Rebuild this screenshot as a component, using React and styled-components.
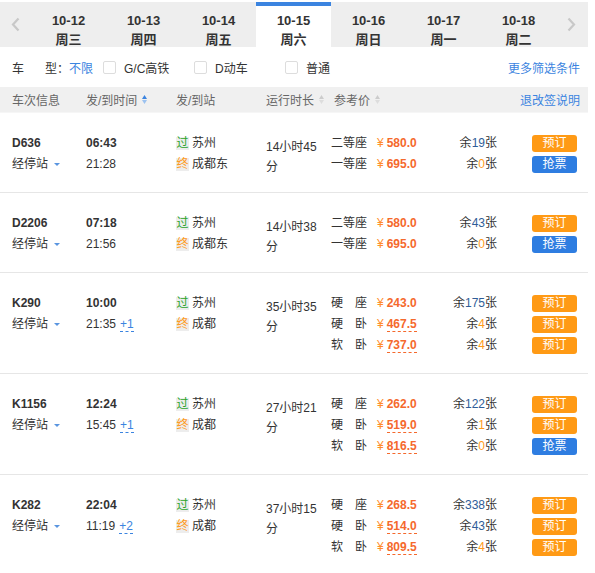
import styled, { createGlobalStyle } from "styled-components";

const GlobalStyle = createGlobalStyle`
  body {
    margin: 0;
    background: #fff;
    font-family: "Liberation Sans", "Noto Sans CJK SC", sans-serif;
    font-size: 12px;
    color: #333;
  }
`;

const Page = styled.div`
  width: 588px;
  padding-top: 2px;
`;

const DateBar = styled.div`
  display: flex;
  height: 45px;
  background: #eee;
`;

const Arrow = styled.div`
  width: 31px;
  display: flex;
  align-items: center;
  justify-content: center;
`;

const DateTab = styled.div`
  width: 75px;
  box-sizing: border-box;
  display: flex;
  flex-direction: column;
  align-items: center;
  font-weight: bold;
  color: #333;
  background: ${(p) => (p.active ? "#fff" : "transparent")};
  border-top: 4px solid ${(p) => (p.active ? "#3b84e0" : "transparent")};
  padding-top: 7px;
`;

const DateNum = styled.div`
  font-size: 13px;
  line-height: 16px;
`;

const DateWeek = styled.div`
  font-size: 13px;
  line-height: 20px;
  margin-top: 1px;
`;

const FilterRow = styled.div`
  display: flex;
  align-items: center;
  height: 40px;
  padding: 0 8px 0 12px;
  font-size: 12px;
`;

const Label = styled.span`
  width: 57px;
  display: flex;
  justify-content: space-between;
`;

const Blue = styled.span`
  color: #3b84e0;
  cursor: pointer;
`;

const Option = styled.label`
  display: flex;
  align-items: center;
  width: 91px;
  color: #333;
`;

const Check = styled.span`
  width: 11px;
  height: 11px;
  border: 1px solid #ddd;
  border-radius: 2px;
  margin-right: 8px;
  background: #fff;
`;

const FirstOption = styled.span`
  width: 34px;
`;

const MoreLink = styled(Blue)`
  margin-left: auto;
`;

const HeadRow = styled.div`
  display: grid;
  grid-template-columns: 74px 90px 90px 68px 1fr auto;
  align-items: center;
  height: 25px;
  padding: 0 8px 0 12px;
  background: #f0f0f0;
  border-bottom: 1px solid #f6f6f6;
  color: #666;
  font-size: 12px;
`;

const HeadCell = styled.span`
  display: flex;
  align-items: center;
  gap: 5px;
`;

const SortIcon = ({ on }) => (
  <svg width="5" height="9" viewBox="0 0 5 9">
    <path d="M2.5 0 L5 4 L0 4 Z" fill={on ? "#3b84e0" : "#ccc"} />
    <path d="M2.5 9 L5 5 L0 5 Z" fill={on ? "#9cc2f0" : "#ddd"} />
  </svg>
);

const TrainRow = styled.div`
  display: grid;
  grid-template-columns: 74px 90px 90px 65px 1fr;
  padding: 20px 8px 17px 12px;
  border-bottom: 1px solid #e6e6e6;
  line-height: 21px;
  font-size: 12px;
`;

const Cell = styled.div`
  display: flex;
  flex-direction: column;
`;

const Bold = styled.span`
  font-weight: bold;
  font-size: 12px;
`;

const Stops = styled.span`
  display: flex;
  align-items: center;
  gap: 6px;
`;

const Caret = styled.span`
  width: 0;
  height: 0;
  border-left: 3px solid transparent;
  border-right: 3px solid transparent;
  border-top: 3px solid #5a95e0;
`;

const Plus = styled.span`
  color: #3b84e0;
  margin-left: 4px;
  border-bottom: 1px dashed #3b84e0;
  line-height: 13px;
`;

const Station = styled.span`
  display: flex;
  align-items: center;
  gap: 3px;
`;

const StationTag = styled.span`
  width: 13px;
  height: 13px;
  font-size: 12px;
  line-height: 13px;
  text-align: center;
  background: #ededed;
  color: ${(p) => p.color};
`;

const Duration = styled.div`
  padding-top: 4px;
  margin-bottom: -2px;
  line-height: 20px;
  width: 56px;
`;

const SeatLine = styled.div`
  display: grid;
  grid-template-columns: 46px 66px 54px 35px 45px;
  align-items: center;
  height: 21px;
`;

const Price = styled.span`
  color: #f5692c;
  font-weight: bold;
  font-size: 12px;
`;

const Yen = styled.span`
  color: #ff8d2a;
  font-weight: normal;
  margin-right: 3px;
`;

const PriceNum = styled.span`
  border-bottom: ${(p) => (p.dashed ? "1px dashed #f5692c" : "none")};
`;

const Remain = styled.span`
  text-align: right;
`;

const Count = styled.span`
  color: ${(p) => (p.low ? "#ff9a1a" : "#2f5d98")};
`;

const Btn = styled.button`
  grid-column: 5;
  width: 45px;
  height: 17px;
  padding: 0;
  border: none;
  border-radius: 3px;
  color: #fff;
  font-family: inherit;
  font-size: 12px;
  line-height: 17px;
  background: ${(p) => (p.grab ? "#2e7de1" : "#ff9a15")};
`;

const dates = [
  ["10-12", "周三"],
  ["10-13", "周四"],
  ["10-14", "周五"],
  ["10-15", "周六"],
  ["10-16", "周日"],
  ["10-17", "周一"],
  ["10-18", "周二"],
];

const trains = [
  {
    no: "D636", dep: "06:43", arr: "21:28", plus: "", to: "成都东", dur: "14小时45分",
    seats: [["二等座", "580.0", false, 19], ["一等座", "695.0", false, 0]],
  },
  {
    no: "D2206", dep: "07:18", arr: "21:56", plus: "", to: "成都东", dur: "14小时38分",
    seats: [["二等座", "580.0", false, 43], ["一等座", "695.0", false, 0]],
  },
  {
    no: "K290", dep: "10:00", arr: "21:35", plus: "+1", to: "成都", dur: "35小时35分",
    seats: [["硬　座", "243.0", false, 175], ["硬　卧", "467.5", true, 4], ["软　卧", "737.0", true, 4]],
  },
  {
    no: "K1156", dep: "12:24", arr: "15:45", plus: "+1", to: "成都", dur: "27小时21分",
    seats: [["硬　座", "262.0", false, 122], ["硬　卧", "519.0", true, 1], ["软　卧", "816.5", true, 0]],
  },
  {
    no: "K282", dep: "22:04", arr: "11:19", plus: "+2", to: "成都", dur: "37小时15分",
    seats: [["硬　座", "268.5", false, 338], ["硬　卧", "514.0", true, 43], ["软　卧", "809.5", true, 4]],
  },
];

const Chevron = ({ dir }) => (
  <svg width="9" height="15" viewBox="0 0 9 15">
    <path
      d={dir === "left" ? "M7.5 1.5 L2 7.5 L7.5 13.5" : "M1.5 1.5 L7 7.5 L1.5 13.5"}
      fill="none"
      stroke="#c8c8c8"
      strokeWidth="2.2"
    />
  </svg>
);

export default function App() {
  return (
    <Page>
      <GlobalStyle />
      <DateBar>
        <Arrow>
          <Chevron dir="left" />
        </Arrow>
        {dates.map(([d, w]) => (
          <DateTab key={d} active={d === "10-15"}>
            <DateNum>{d}</DateNum>
            <DateWeek>{w}</DateWeek>
          </DateTab>
        ))}
        <Arrow>
          <Chevron dir="right" />
        </Arrow>
      </DateBar>

      <FilterRow>
        <Label>
          <span>车</span>
          <span>型：</span>
        </Label>
        <FirstOption>
          <Blue>不限</Blue>
        </FirstOption>
        <Option>
          <Check />
          G/C高铁
        </Option>
        <Option>
          <Check />
          D动车
        </Option>
        <Option>
          <Check />
          普通
        </Option>
        <MoreLink>更多筛选条件</MoreLink>
      </FilterRow>

      <HeadRow>
        <HeadCell>车次信息</HeadCell>
        <HeadCell>
          发/到时间 <SortIcon on />
        </HeadCell>
        <HeadCell>发/到站</HeadCell>
        <HeadCell>
          运行时长 <SortIcon />
        </HeadCell>
        <HeadCell>
          参考价 <SortIcon />
        </HeadCell>
        <Blue>退改签说明</Blue>
      </HeadRow>

      {trains.map((t) => (
        <TrainRow key={t.no}>
          <Cell>
            <Bold>{t.no}</Bold>
            <Stops>
              经停站 <Caret />
            </Stops>
          </Cell>
          <Cell>
            <Bold>{t.dep}</Bold>
            <span>
              {t.arr}
              {t.plus && <Plus>{t.plus}</Plus>}
            </span>
          </Cell>
          <Cell>
            <Station>
              <StationTag color="#2aa52a">过</StationTag>苏州
            </Station>
            <Station>
              <StationTag color="#ff9a1a">终</StationTag>
              {t.to}
            </Station>
          </Cell>
          <Duration>{t.dur}</Duration>
          <Cell>
            {t.seats.map(([type, price, dashed, count]) => (
              <SeatLine key={type}>
                <span>{type}</span>
                <Price>
                  <Yen>¥</Yen>
                  <PriceNum dashed={dashed}>{price}</PriceNum>
                </Price>
                <Remain>
                  余<Count low={count < 10}>{count}</Count>张
                </Remain>
                <Btn grab={count === 0}>{count === 0 ? "抢票" : "预订"}</Btn>
              </SeatLine>
            ))}
          </Cell>
        </TrainRow>
      ))}
    </Page>
  );
}
